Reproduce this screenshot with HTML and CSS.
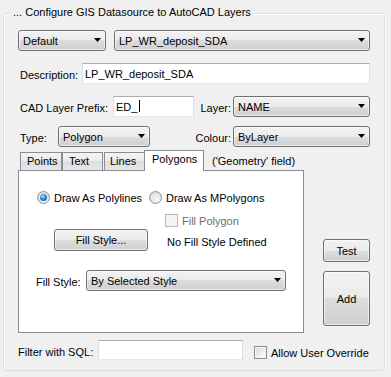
FILE: index.html
```html
<!DOCTYPE html>
<html lang="en">
<head>
    <meta charset="UTF-8">
    <meta name="viewport" content="width=device-width, initial-scale=1.0">
    <title>Configure GIS Datasource</title>
    <link rel="stylesheet" href="styles.css">
</head>
<body>

<div class="group">
    <span class="group-title">... Configure GIS Datasource to AutoCAD Layers</span>

    <div class="row row-source">
        <div class="combo combo-profile">Default</div>
        <div class="combo combo-grow">LP_WR_deposit_SDA</div>
    </div>

    <div class="row">
        <label class="field-label label-desc">Description:</label>
        <div class="textbox textbox-grow">LP_WR_deposit_SDA</div>
    </div>

    <div class="row">
        <label class="field-label label-prefix">CAD Layer Prefix:</label>
        <div class="textbox textbox-prefix">ED_<span class="caret"></span></div>
        <label class="field-label label-right">Layer:</label>
        <div class="combo combo-right">NAME</div>
    </div>

    <div class="row row-type">
        <label class="field-label label-type">Type:</label>
        <div class="combo combo-type">Polygon</div>
        <label class="field-label label-right">Colour:</label>
        <div class="combo combo-right">ByLayer</div>
    </div>

    <div class="tab-area">
        <div class="tabs">
            <div class="tab-strip">
                <div class="tab tab-points">Points</div>
                <div class="tab tab-text">Text</div>
                <div class="tab tab-lines">Lines</div>
                <div class="tab tab-selected">Polygons</div>
                <span class="tab-note">('Geometry' field)</span>
            </div>
            <div class="tab-panel">
                <div class="panel-row radio-row">
                    <span class="option option-poly"><span class="radio checked"></span>Draw As Polylines</span>
                    <span class="option"><span class="radio"></span>Draw As MPolygons</span>
                </div>
                <div class="panel-row check-row">
                    <span class="option disabled"><span class="checkbox"></span>Fill Polygon</span>
                </div>
                <div class="panel-row button-row">
                    <button class="btn btn-fill">Fill Style...</button>
                    <span class="fill-status">No Fill Style Defined</span>
                </div>
                <div class="panel-row style-row">
                    <label class="field-label label-fill">Fill Style:</label>
                    <div class="combo combo-fill">By Selected Style</div>
                </div>
            </div>
        </div>
        <div class="side">
            <button class="btn btn-test">Test</button>
            <button class="btn btn-add">Add</button>
        </div>
    </div>

    <div class="row row-filter">
        <label class="field-label label-filter">Filter with SQL:</label>
        <div class="textbox textbox-filter"></div>
        <span class="option option-override"><span class="checkbox"></span>Allow User Override</span>
    </div>
</div>

</body>
</html>
```

FILE: styles.css
```css
body {
    margin: 0;
    background: #f0f0f0;
    font-family: "Liberation Sans", Arial, sans-serif;
    font-size: 11px;
    color: #000;
}

.group {
    position: relative;
    box-sizing: border-box;
    height: 358px;
    margin: 13px 6px 0 3px;
    padding: 0 14px;
    border: 1px solid #d5dfe5;
    border-radius: 3px;
    box-shadow: inset 1px 1px 0 #fff, 1px 1px 0 #fff;
}

.group-title {
    position: absolute;
    top: -8px;
    left: 6px;
    padding: 0 3px;
    background: #f0f0f0;
    line-height: 13px;
}

.row {
    display: flex;
    align-items: center;
    height: 21px;
    margin-top: 12px;
}

.row-source {
    margin-top: 16px;
    gap: 8px;
}

.row-type {
    margin-top: 9px;
}

.field-label {
    box-sizing: border-box;
    padding-top: 3px;
    line-height: 13px;
    white-space: nowrap;
}

.label-desc {
    width: 64px;
    padding-left: 2px;
}

.label-prefix {
    width: 95px;
    padding-left: 2px;
}

.label-type {
    width: 40px;
    padding-left: 2px;
}

.label-right {
    flex: 1;
    text-align: right;
    padding-right: 2px;
}

.label-fill {
    width: 50px;
}

.label-filter {
    width: 80px;
}

/* combo boxes */
.combo {
    position: relative;
    box-sizing: border-box;
    display: flex;
    align-items: center;
    height: 21px;
    padding-left: 4px;
    border: 1px solid #707070;
    border-radius: 3px;
    background: linear-gradient(#f2f2f2 0%, #ebebeb 50%, #dddddd 50%, #cfcfcf 100%);
    box-shadow: inset 0 0 0 1px rgba(255, 255, 255, 0.55);
    white-space: nowrap;
}

.combo::after {
    content: "";
    position: absolute;
    right: 4px;
    top: 7px;
    width: 7px;
    height: 4px;
    background: #000;
    clip-path: polygon(0 0, 100% 0, 50% 100%);
}

.combo-profile {
    width: 88px;
}

.combo-grow {
    flex: 1;
}

.combo-right {
    width: 137px;
}

.combo-type {
    width: 92px;
}

.combo-fill {
    width: 200px;
}

/* text boxes */
.textbox {
    box-sizing: border-box;
    display: flex;
    align-items: center;
    height: 21px;
    padding-left: 2px;
    background: #fff;
    border: 1px solid #dbdfe6;
    border-top-color: #abadb3;
    border-bottom-color: #e3e9ef;
    white-space: nowrap;
}

.textbox-grow {
    flex: 1;
}

.textbox-prefix {
    width: 81px;
}

.textbox-filter {
    width: 145px;
    height: 20px;
}

.caret {
    display: inline-block;
    width: 1px;
    height: 12px;
    margin-left: 2px;
    margin-top: -2px;
    background: #000;
}

/* tabs */
.tab-area {
    display: flex;
    margin-top: 3px;
}

.tabs {
    width: 286px;
}

.tab-strip {
    display: flex;
    align-items: flex-end;
    height: 20px;
    padding-left: 2px;
}

.tab {
    box-sizing: border-box;
    height: 18px;
    padding-left: 6px;
    line-height: 17px;
    border: 1px solid #898c95;
    border-bottom: none;
    background: linear-gradient(#f3f3f3 0%, #ebebeb 50%, #dedede 50%, #e6e6e6 100%);
}

.tab-points {
    width: 42px;
}

.tab-text {
    width: 41px;
}

.tab-lines {
    width: 41px;
    margin-left: 1px;
    padding-left: 5px;
}

.tab-selected {
    position: relative;
    z-index: 1;
    width: 60px;
    height: 21px;
    margin-left: -1px;
    margin-bottom: -1px;
    padding-left: 7px;
    line-height: 17px;
    background: #fff;
}

.tab-note {
    margin-left: 8px;
    align-self: center;
    padding-top: 1px;
}

.tab-panel {
    box-sizing: border-box;
    height: 163px;
    padding-top: 20px;
    border: 1px solid #898c95;
    background: #fff;
}

.panel-row {
    display: flex;
    align-items: center;
}

.radio-row {
    height: 13px;
    margin-left: 18px;
}

.check-row {
    height: 13px;
    margin-top: 10px;
    margin-left: 146px;
}

.button-row {
    margin-top: 2px;
    margin-left: 35px;
}

.style-row {
    height: 21px;
    margin-top: 19px;
    margin-left: 17px;
}

.option {
    display: inline-flex;
    align-items: center;
    gap: 4px;
    white-space: nowrap;
}

.option-poly {
    width: 112px;
}

.option.disabled {
    color: #6d6d6d;
}

.radio {
    box-sizing: border-box;
    position: relative;
    width: 13px;
    height: 13px;
    border: 1px solid #8e8f8f;
    border-radius: 50%;
    background: radial-gradient(circle at 60% 65%, #f8f8f8 0%, #e3e3e3 60%, #cfcfcf 100%);
}

.radio.checked::after {
    content: "";
    position: absolute;
    left: 2px;
    top: 2px;
    width: 7px;
    height: 7px;
    border-radius: 50%;
    background: radial-gradient(circle at 40% 35%, #b5e0ff 0%, #2a8ad4 45%, #0f4f8c 100%);
}

.checkbox {
    box-sizing: border-box;
    width: 13px;
    height: 13px;
    border: 1px solid #8e8f8f;
    background: linear-gradient(135deg, #d8d8d8 0%, #f4f4f4 70%, #ffffff 100%);
    box-shadow: inset 0 0 0 1px #f4f4f4;
}

.disabled .checkbox {
    border-color: #b7b7b7;
    background: #f4f4f4;
}

.fill-status {
    margin-left: 19px;
    padding-top: 4px;
}

/* buttons */
.btn {
    box-sizing: border-box;
    padding: 0;
    font: inherit;
    color: #000;
    border: 1px solid #707070;
    border-radius: 3px;
    background: linear-gradient(#f2f2f2 0%, #ebebeb 50%, #dddddd 50%, #cfcfcf 100%);
    box-shadow: inset 0 0 0 1px rgba(255, 255, 255, 0.55);
}

.btn-fill {
    width: 94px;
    height: 22px;
}

.side {
    display: flex;
    flex-direction: column;
    justify-content: flex-end;
    gap: 9px;
    width: 47px;
    margin-left: auto;
    padding-bottom: 7px;
}

.btn-test {
    height: 23px;
}

.btn-add {
    height: 55px;
}

.row-filter {
    height: 20px;
    margin-top: 7px;
    align-items: flex-end;
}

.row-filter .field-label {
    padding-top: 0;
    padding-bottom: 1px;
}

.option-override {
    margin-left: 11px;
    padding-bottom: 1px;
}
```
